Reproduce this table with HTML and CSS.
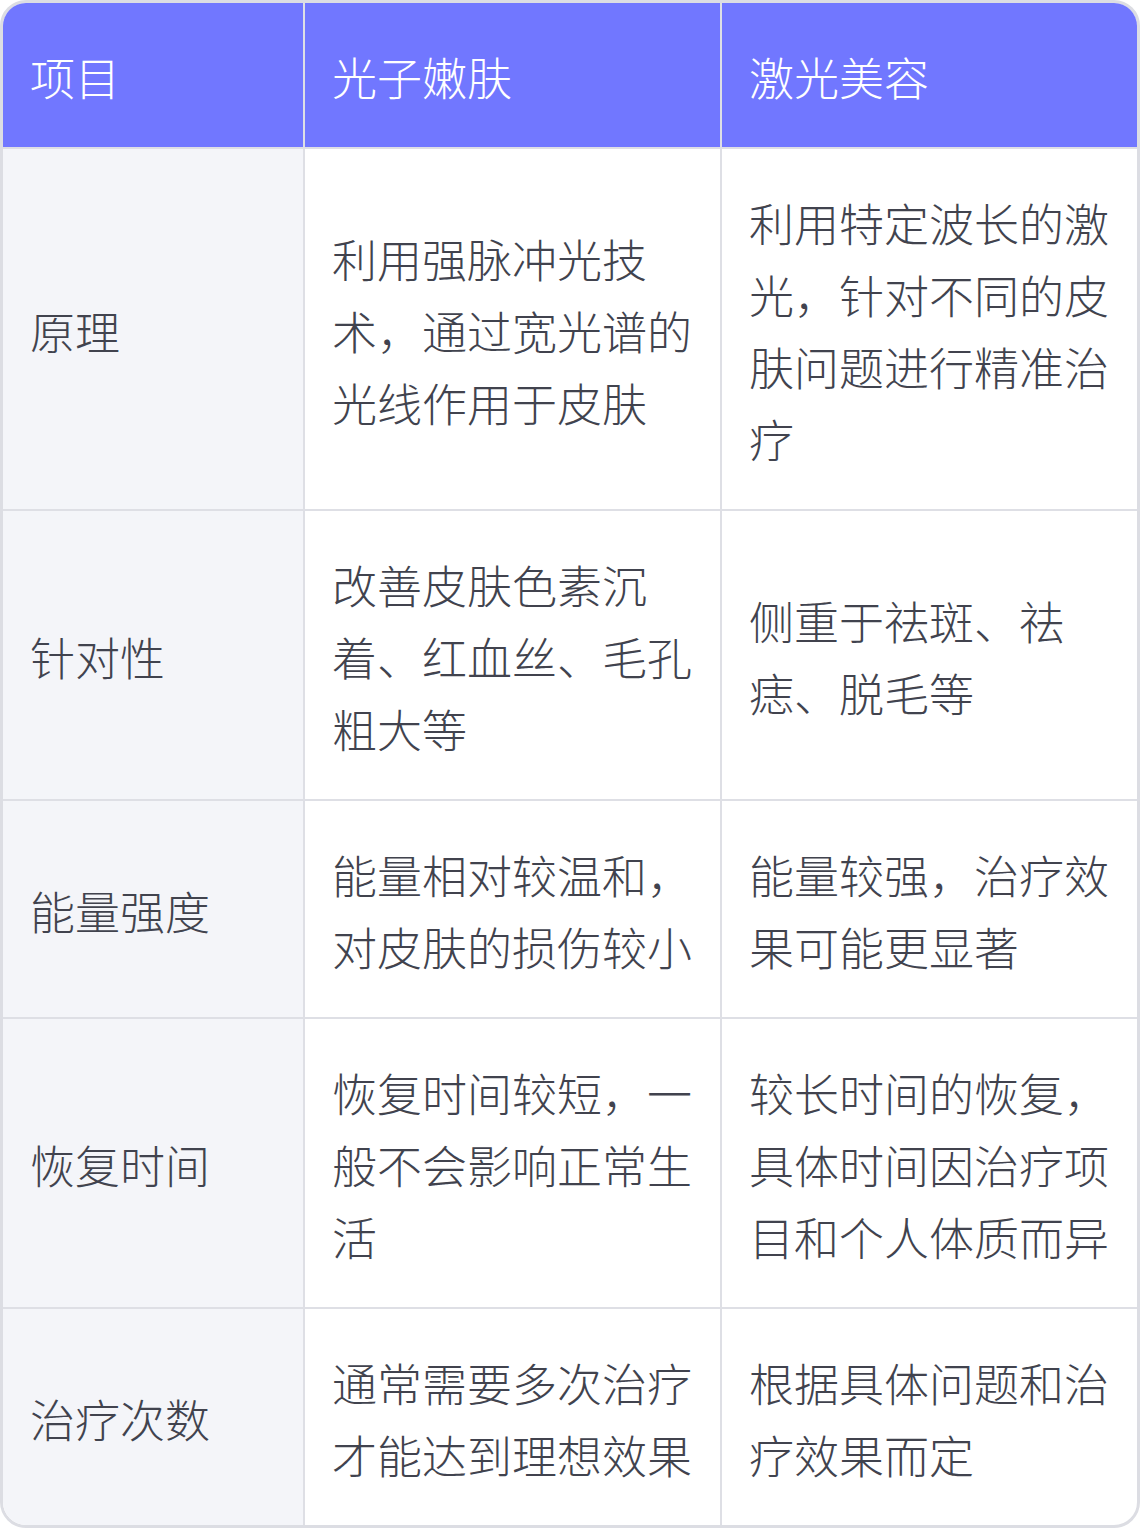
FILE: index.html
```html
<!DOCTYPE html>
<html lang="zh-CN">
<head>
<meta charset="utf-8">
<link rel="stylesheet" href="styles.css">
</head>
<body>
<div class="frame">
<table class="compare">
  <colgroup>
    <col class="c1"><col class="c2"><col class="c3">
  </colgroup>
  <thead>
    <tr><th>项目</th><th>光子嫩肤</th><th>激光美容</th></tr>
  </thead>
  <tbody>
    <tr><td>原理</td><td>利用强脉冲光技术，通过宽光谱的光线作用于皮肤</td><td>利用特定波长的激光，针对不同的皮肤问题进行精准治疗</td></tr>
    <tr><td>针对性</td><td>改善皮肤色素沉着、红血丝、毛孔粗大等</td><td>侧重于祛斑、祛痣、脱毛等</td></tr>
    <tr><td>能量强度</td><td>能量相对较温和，对皮肤的损伤较小</td><td>能量较强，治疗效果可能更显著</td></tr>
    <tr><td>恢复时间</td><td>恢复时间较短，一般不会影响正常生活</td><td>较长时间的恢复，具体时间因治疗项目和个人体质而异</td></tr>
    <tr><td>治疗次数</td><td>通常需要多次治疗才能达到理想效果</td><td>根据具体问题和治疗效果而定</td></tr>
  </tbody>
</table>
</div>
</body>
</html>
```
FILE: styles.css
```css
html, body {
  margin: 0;
  padding: 0;
  background: #ffffff;
}
.frame {
  width: 1140px;
  height: 1528px;
  box-sizing: border-box;
  border: 3px solid #dcdde3;
  border-radius: 26px;
  overflow: hidden;
  background: #ffffff;
}
.compare {
  width: 100%;
  border-collapse: collapse;
  table-layout: fixed;
  font-family: "Noto Sans CJK SC", "Noto Sans", sans-serif;
  font-weight: 300;
  font-size: 45px;
  line-height: 72px;
}
.c1 { width: 301px; }
.c2 { width: 417px; }
.c3 { width: 416px; }
.compare th,
.compare td {
  padding: 38px 27px 34px;
  text-align: left;
  vertical-align: middle;
  border: 2px solid #dedfe5;
}
.compare tr > :first-child { border-left: none; }
.compare tr > :last-child { border-right: none; }
.compare thead tr > * { border-top: none; }
.compare tbody tr:last-child > * { border-bottom: none; }
.compare th {
  background: #7177ff;
  color: #ffffff;
  font-weight: 300;
}
.compare td {
  color: #41434e;
}
.compare td:first-child {
  background: #f4f5f9;
}
```
